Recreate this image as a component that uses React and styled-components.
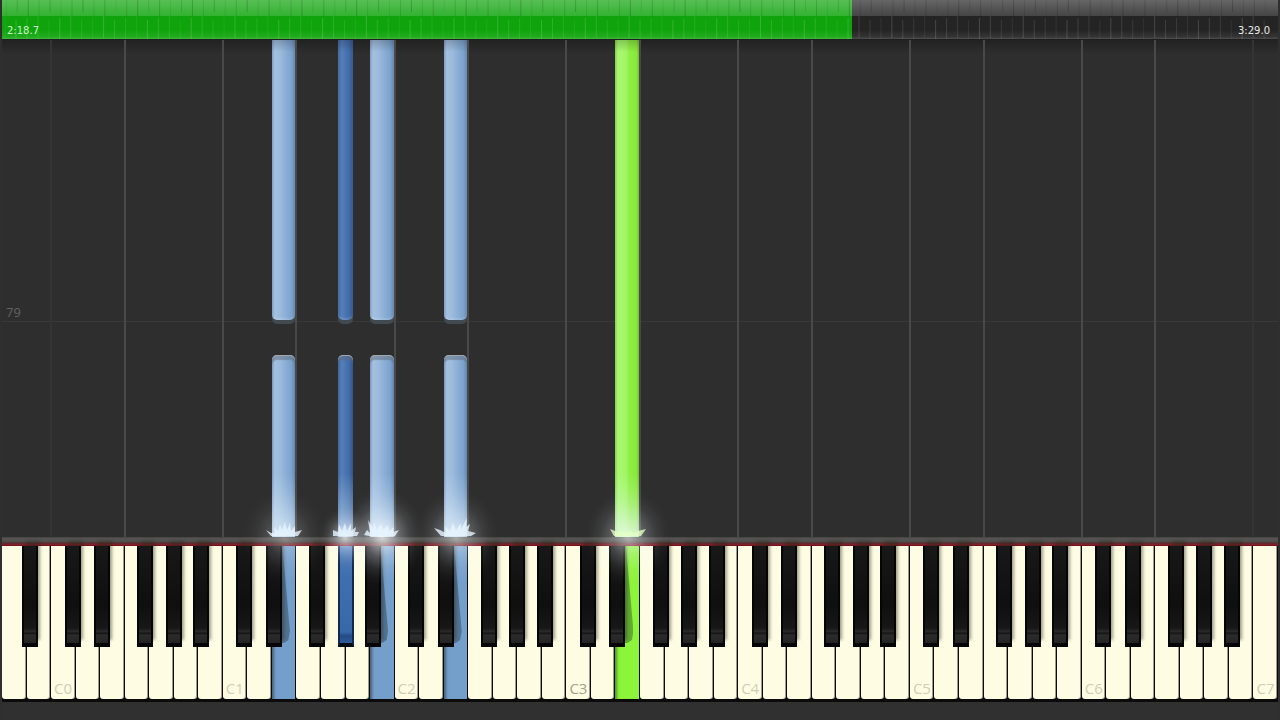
import React, { useState } from 'react';
import styled, { createGlobalStyle, css } from 'styled-components';

const GlobalStyle = createGlobalStyle`
  * {
    box-sizing: border-box;
  }

  body {
    margin: 0;
    background: #2f2f2f;
    font-family: 'Open Sans', 'Noto Sans', sans-serif;
  }
`;

const LETTERS = ['A', 'B', 'C', 'D', 'E', 'F', 'G'];

// how far each black key sits from the edge between its two white keys
const SHARP_OFFSET = { A: 3, C: -3, D: 2, F: -4, G: 0 };

const KEYS = Array.from({ length: 52 }, (_, i) => {
  const letter = LETTERS[i % 7];
  const octave = Math.floor((i + 5) / 7) - 1;
  return {
    id: i,
    letter,
    octave,
    name: `${letter}${octave}`,
    sharp: i < 51 && SHARP_OFFSET[letter] !== undefined,
  };
});

// start and end are percentages of the visible part of the song
const NOTES = [
  { key: 11, hand: 'left', start: 0, end: 56.4 },
  { key: 13, sharp: true, hand: 'left', start: 0, end: 56.4 },
  { key: 15, hand: 'left', start: 0, end: 56.4 },
  { key: 18, hand: 'left', start: 0, end: 56.4 },
  { key: 11, hand: 'left', start: 63.4, end: 100 },
  { key: 13, sharp: true, hand: 'left', start: 63.4, end: 100 },
  { key: 15, hand: 'left', start: 63.4, end: 100 },
  { key: 18, hand: 'left', start: 63.4, end: 100 },
  { key: 25, hand: 'right', start: 0, end: 100 },
];

const PLAYING = NOTES.filter((note) => note.end === 100);

const BARS = Array.from({ length: 116 }, (_, i) => i);

const FLAMES = {
  11: 'M0 12 L5 15 L9 15 L8 9 L12 13 L14 6 L16 12 L19 4 L21 12 L24 5 L25 13 L29 8 L29 14 L36 12 L32 18 L5 18 Z',
  13: 'M6 18 L6 12 L11 14 L12 6 L15 13 L18 5 L20 13 L24 5 L24 13 L29 9 L28 14 L32 14 L30 18 Z',
  15: 'M0 17 L3 12 L6 15 L4 2 L9 10 L10 4 L13 12 L17 6 L19 12 L24 7 L25 13 L30 9 L29 14 L35 12 L31 18 L5 18 Z',
  18: 'M-4 10 L2 12 L8 15 L7 8 L12 13 L15 5 L18 12 L23 5 L23 11 L29 0 L28 9 L32 6 L30 13 L38 15 L33 18 L3 18 Z',
  25: 'M0 11 L5 13 L8 14 L12 13 L16 15 L20 13 L24 15 L28 13 L36 11 L31 18 L4 18 Z',
};

const GLOWS = { 11: 0.4, 13: 0.85, 15: 0.9, 18: 0.6, 25: 0.65 };

const Screen = styled.main`
  display: flex;
  flex-direction: column;
  min-height: 100vh;
  padding: 0 2px;
  background: #2f2f2f;
`;

const SongBar = styled.header`
  position: relative;
  height: 40px;
  border-bottom: 1px solid #1c1f1c;
  color: #fff;
`;

const Seek = styled.input`
  display: block;
  appearance: none;
  width: 100%;
  height: 39px;
  margin: 0;
  outline: none;
  background: linear-gradient(
      rgba(255, 255, 255, 0.3),
      rgba(255, 255, 255, 0.15) 16px,
      transparent 16px,
      transparent 30px,
      rgba(255, 255, 255, 0.08) 37px,
      rgba(255, 255, 255, 0.2) 39px
    ),
    linear-gradient(
      90deg,
      #0fa40c var(--played),
      #242424 var(--played)
    );
  cursor: pointer;

  &::-webkit-slider-thumb {
    appearance: none;
    width: 1px;
    height: 39px;
    background: transparent;
  }
`;

const BarTicks = styled.svg`
  position: absolute;
  top: 0;
  left: 0;
  width: 100%;
  height: 39px;
  pointer-events: none;
`;

const Time = styled.span`
  position: absolute;
  bottom: 2px;
  ${(props) => (props.$end ? 'right: 8px;' : 'left: 5px;')}
  font-family: 'DejaVu Sans', sans-serif;
  font-size: 10px;
  line-height: 12px;
  color: ${(props) => (props.$end ? '#e8e8e8' : '#cdf5cb')};
  pointer-events: none;
`;

const Roll = styled.section`
  position: relative;
  z-index: 2;
  flex: 1;
  display: grid;
  grid-template-columns: repeat(52, minmax(0, 1fr));
  background: linear-gradient(#222, #2e2e2e 14px);
`;

const Lane = styled.div`
  position: relative;
  margin-left: -1px;
  margin-right: 1px;
  border-left: 2px solid ${(props) => props.$line || 'transparent'};
`;

const Measure = styled.div`
  position: absolute;
  left: 0;
  right: 0;
  top: 56.6%;
  border-top: 1px solid #393939;
`;

const MeasureNumber = styled.span`
  position: absolute;
  left: 4px;
  bottom: 2px;
  font-size: 13px;
  line-height: 16px;
  color: #626262;
`;

const noteColors = {
  left: 'linear-gradient(90deg, #7b9bc3, #a4c0e0 12%, #9cbbdd 35%, #7ba1cc 85%, #6486b0)',
  leftSharp: 'linear-gradient(90deg, #41659c, #547fba 25%, #416ba8 75%, #335488)',
  right: 'linear-gradient(90deg, #84cf4e, #a9f870 12%, #a2f666 45%, #8fef43 60%, #88e83c 90%, #6cbc30)',
};

const Note = styled.div`
  position: absolute;
  left: ${(props) => (props.$sharp ? 'calc(100% - 7px)' : '-1px')};
  width: ${(props) => (props.$sharp ? '15px' : 'calc(100% + 1px)')};
  background: ${(props) =>
    noteColors[props.$sharp ? 'leftSharp' : props.$hand]};
  z-index: 1;

  ${(props) =>
    props.$released &&
    css`
      border-radius: 0 0 5px 5px;
      box-shadow: 0 4px 0 #414951, inset 0 -2px 2px rgba(255, 255, 255, 0.15);
    `}

  ${(props) =>
    props.$struck &&
    css`
      border-radius: 5px 5px 0 0;
      box-shadow: inset 0 1px 0 #a0a7b0, inset 0 5px 1px rgba(95, 105, 120, 0.5);
    `}

  &::after {
    content: '';
    position: absolute;
    inset: 0;
    background: ${(props) =>
      props.$released
        ? 'linear-gradient(rgba(0, 0, 0, 0.2), transparent 12px)'
        : `linear-gradient(${
            props.$struck ? 'transparent' : 'rgba(0, 0, 0, 0.2)'
          }, transparent 12px, transparent calc(100% - 64px), rgba(235, 250, 255, 0.5))`};
  }
`;

const Hit = styled.div`
  position: absolute;
  bottom: 0;
  left: ${(props) => (props.$sharp ? '100%' : '50%')};
  width: 0;
  height: 0;
  z-index: 2;
  pointer-events: none;
`;

const Glow = styled.div`
  position: absolute;
  top: -49px;
  left: -42px;
  width: 84px;
  height: 98px;
  opacity: ${(props) => props.$strength};
  background: radial-gradient(
    ${(props) => (props.$sharp ? '26px 30px' : '42px 48px')} at center,
    rgba(255, 255, 255, 0.85),
    rgba(245, 248, 255, 0.6) 20%,
    rgba(240, 246, 255, 0.32) 42%,
    rgba(235, 242, 250, 0.12) 66%,
    rgba(235, 242, 250, 0.03) 86%,
    transparent
  );
`;

const Flame = styled.svg`
  position: absolute;
  top: -19px;
  left: -18px;
  overflow: visible;
`;

const Rail = styled.div`
  height: 9px;
  background: linear-gradient(
    #454545,
    #585653 2px,
    #4e4b49 5px,
    #5c2b30 6px,
    #8d1c26 8px,
    #541018
  );
`;

const Keyboard = styled.section`
  display: grid;
  grid-template-columns: repeat(52, minmax(0, 1fr));
  height: 156px;
  padding-bottom: 3px;
  background: #0b0b0b;
`;

const Slot = styled.div`
  position: relative;
  display: flex;
`;

const pressedColors = { left: '#759fcb', right: '#8cf43a' };

const WhiteKey = styled.button`
  flex: 1;
  display: flex;
  align-items: flex-end;
  margin: 0 1px 0 0;
  padding: 0 0 1px 3px;
  border: 0;
  border-radius: 0 0 3px 3px;
  background: ${(props) => pressedColors[props.$pressed] || '#fefde4'};
  box-shadow: inset -1px 0 0 rgba(60, 60, 45, 0.5);
  font-family: inherit;
  font-size: 15px;
  line-height: 20px;
  color: ${(props) => (props.$middle ? '#a4a28c' : '#d0ceb5')};
  cursor: pointer;

  ${(props) =>
    props.$pressed &&
    css`
      border-radius: 0;
      box-shadow: inset 4px 0 3px -2px rgba(0, 0, 0, 0.4);

      &::after {
        content: '';
        position: absolute;
        top: 0;
        left: 8px;
        width: 10px;
        height: 97px;
        background: rgba(20, 35, 40, 0.35);
        clip-path: polygon(0 0, 25% 0, 100% 88%, 85% 97%, 40% 100%, 0 100%);
      }
    `}
`;

const BlackKey = styled.button`
  position: absolute;
  top: 0;
  left: calc(100% - 8px + ${(props) => props.$offset}px);
  z-index: 1;
  width: 16px;
  height: 101px;
  padding: 0;
  border: 2px solid #050505;
  border-width: 0 2px 4px;
  background: linear-gradient(#181818, #0f0f0f 60%, #171717 82px, #2c2c2c 86px, #111 87px, #2b2b2b 89px, #242424);
  box-shadow: 3px -6px 3px -1px rgba(40, 40, 25, 0.45);
  cursor: pointer;

  ${(props) =>
    props.$pressed &&
    css`
      border-color: #142a4b;
      border-bottom-color: #080b12;
      background: linear-gradient(#5580bb, #3f6fae 30px, #3768a8 86px, #234a85 90px, #2f5c9c);
      box-shadow: none;
    `}
`;

const Foot = styled.footer`
  height: 18px;
  background: #303030;
`;

function laneLine(key) {
  if (key.name === 'C0' || key.name === 'C7') return '#343434';
  if (key.letter === 'C' || key.letter === 'F') return '#494949';
  return null;
}

function ProgressBar() {
  const [position, setPosition] = useState(66.6);

  return (
    <SongBar>
      <Seek
        type="range"
        min="0"
        max="100"
        step="0.1"
        aria-label="Song position"
        value={position}
        onChange={(e) => setPosition(Number(e.target.value))}
        style={{ '--played': `${position}%` }}
      />
      <BarTicks aria-hidden="true">
        {BARS.map((i) => (
          <React.Fragment key={i}>
            <rect
              x={`${i * 0.858 + 0.3}%`}
              width="1"
              height={i % 3 === 1 ? 12 : 16}
              fill="#000"
              opacity={0.06 + ((i * 7) % 5) * 0.03}
            />
            <rect
              x={`${i * 0.858 + 0.2}%`}
              y={16 + ((i * 5) % 3) * 2}
              width="1"
              height="22"
              fill="#fff"
              opacity={0.07 + ((i * 3) % 4) * 0.03}
            />
          </React.Fragment>
        ))}
      </BarTicks>
      <Time>2:18.7</Time>
      <Time $end>3:29.0</Time>
    </SongBar>
  );
}

function NoteHit({ note }) {
  return (
    <Hit $sharp={note.sharp}>
      <Glow $strength={GLOWS[note.key]} $sharp={note.sharp} />
      <Flame width="36" height="18" aria-hidden="true">
        <path
          d={FLAMES[note.key]}
          fill={note.hand === 'right' ? '#e4ffc4' : '#e6f5ff'}
          opacity="0.8"
        />
      </Flame>
    </Hit>
  );
}

function PianoRoll() {
  return (
    <Roll aria-label="Falling notes">
      <Measure>
        <MeasureNumber>79</MeasureNumber>
      </Measure>
      {KEYS.map((key) => (
        <Lane key={key.id} $line={laneLine(key)}>
          {NOTES.filter((note) => note.key === key.id).map((note) => (
            <Note
              key={note.start}
              $hand={note.hand}
              $sharp={note.sharp}
              $released={note.end < 100}
              $struck={note.start > 0}
              style={{ top: `${note.start}%`, height: `${note.end - note.start}%` }}
            />
          ))}
          {PLAYING.filter((note) => note.key === key.id).map((note) => (
            <NoteHit key={note.key} note={note} />
          ))}
        </Lane>
      ))}
    </Roll>
  );
}

function Piano() {
  const pressed = (id, sharp) =>
    PLAYING.find((note) => note.key === id && Boolean(note.sharp) === sharp)?.hand;

  return (
    <Keyboard aria-label="Piano keyboard">
      {KEYS.map((key) => (
        <Slot key={key.id}>
          <WhiteKey
            aria-label={key.name}
            $pressed={pressed(key.id, false)}
            $middle={key.name === 'C3'}
          >
            {key.letter === 'C' ? key.name : ''}
          </WhiteKey>
          {key.sharp && (
            <BlackKey
              aria-label={`${key.letter}#${key.octave}`}
              $offset={SHARP_OFFSET[key.letter]}
              $pressed={pressed(key.id, true)}
            />
          )}
        </Slot>
      ))}
    </Keyboard>
  );
}

export default function App() {
  return (
    <Screen>
      <GlobalStyle />
      <ProgressBar />
      <PianoRoll />
      <Rail />
      <Piano />
      <Foot />
    </Screen>
  );
}
